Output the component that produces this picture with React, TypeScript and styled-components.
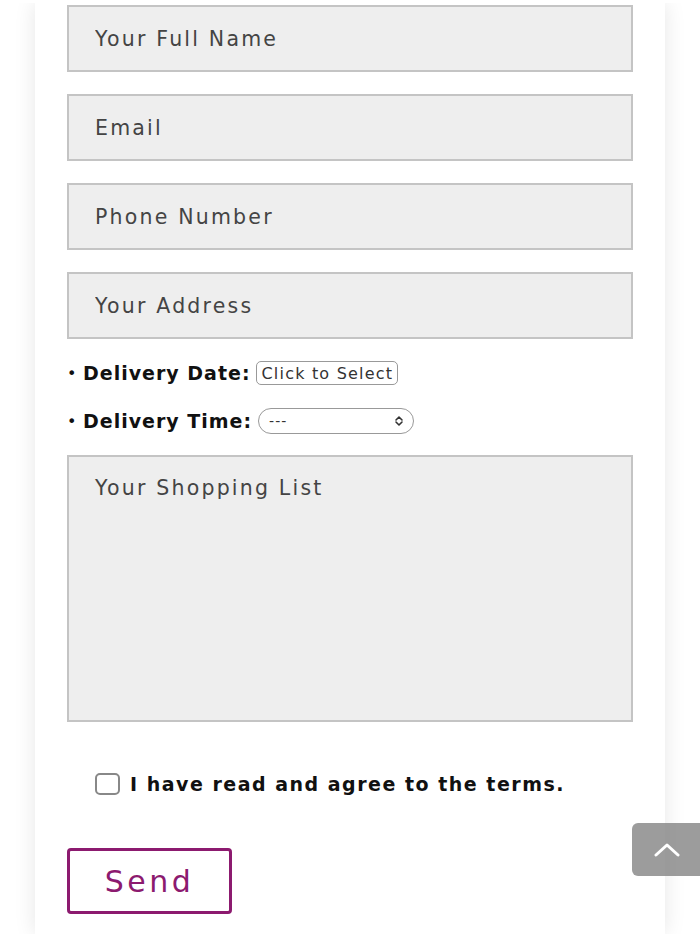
import * as React from 'react';
import styled, { createGlobalStyle } from 'styled-components';

const Global = createGlobalStyle`
  html, body {
    margin: 0;
    padding: 0;
    background: #ffffff;
  }
  body {
    font-family: 'DejaVu Sans', 'Open Sans', sans-serif;
  }
`;

const Frame = styled.div`
  padding: 3px 15px 0;
  height: 931px;
  overflow: hidden;
`;

const Shadowed = styled.div`
  height: 100%;
  padding: 0 20px;
  overflow: hidden;
`;

const Card = styled.div`
  height: 100%;
  background: #ffffff;
  box-shadow: 0 0 20px rgba(0, 0, 0, 0.1);
  padding: 2px 32px 0;
  box-sizing: border-box;
`;

const Form = styled.form`
  display: flex;
  flex-direction: column;
`;

const Field = styled.input`
  box-sizing: border-box;
  height: 67px;
  width: 100%;
  margin-bottom: 22px;
  border: 2px solid #c4c4c4;
  background: #eeeeee;
  padding: 0 26px;
  font-family: inherit;
  font-size: 20.5px;
  letter-spacing: 2.2px;
  color: #444;
  outline: none;
  &::placeholder {
    color: #444;
  }
`;

const Bullets = styled.ul`
  list-style: none;
  margin: 0;
  padding: 0;
  display: flex;
  flex-direction: column;
  gap: 23px;
`;

const Item = styled.li`
  display: flex;
  align-items: center;
  font-size: 19px;
  font-weight: bold;
  letter-spacing: 1px;
  color: #111;
  &::before {
    content: '•';
    font-weight: normal;
    font-size: 16px;
    width: 16px;
  }
`;

const Label = styled.span`
  margin-right: 6px;
`;

const DateButton = styled.button`
  box-sizing: border-box;
  height: 24px;
  padding: 0 4px 0 4px;
  border: 1px solid #999;
  border-radius: 5px;
  background: #fff;
  font-family: inherit;
  font-size: 16px;
  letter-spacing: 1.2px;
  color: #333;
`;

const Select = styled.div`
  box-sizing: border-box;
  height: 26px;
  width: 156px;
  display: flex;
  align-items: center;
  justify-content: space-between;
  padding: 0 8px 0 10px;
  border: 1px solid #999;
  border-radius: 13px;
  font-size: 14px;
  font-weight: normal;
  letter-spacing: 1px;
  color: #333;
`;

const ShoppingList = styled.textarea`
  box-sizing: border-box;
  margin-top: 21px;
  height: 267px;
  width: 100%;
  border: 2px solid #c4c4c4;
  background: #eeeeee;
  padding: 19px 26px;
  resize: none;
  font-family: inherit;
  font-size: 20.5px;
  letter-spacing: 2.2px;
  color: #444;
  outline: none;
  &::placeholder {
    color: #444;
  }
`;

const Agree = styled.label`
  display: flex;
  align-items: center;
  margin: 51px 0 0 28px;
  font-size: 19px;
  font-weight: bold;
  letter-spacing: 1.5px;
  color: #111;
`;

const Box = styled.span`
  box-sizing: border-box;
  width: 25px;
  height: 22px;
  border: 2px solid #888;
  border-radius: 5px;
  margin-right: 10px;
`;

const Send = styled.button`
  box-sizing: border-box;
  margin-top: 53px;
  width: 165px;
  height: 66px;
  border: 3px solid #8c1a6f;
  border-radius: 4px;
  background: #fff;
  color: #8c1a6f;
  font-family: inherit;
  font-size: 30px;
  letter-spacing: 3.5px;
  padding: 0;
`;

const ToTop = styled.div`
  position: fixed;
  left: 632px;
  top: 823px;
  width: 90px;
  height: 53px;
  border-radius: 6px;
  background: rgba(128, 128, 128, 0.78);
  display: flex;
  align-items: center;
  padding-left: 22px;
  box-sizing: border-box;
`;

export default function App() {
  return (
    <>
      <Global />
      <Frame>
        <Shadowed>
          <Card>
            <Form onSubmit={(e) => e.preventDefault()}>
              <Field placeholder="Your Full Name" />
              <Field placeholder="Email" />
              <Field placeholder="Phone Number" />
              <Field placeholder="Your Address" />
              <Bullets>
                <Item>
                  <Label>Delivery Date:</Label>
                  <DateButton type="button">Click to Select</DateButton>
                </Item>
                <Item>
                  <Label>Delivery Time:</Label>
                  <Select>
                    <span>---</span>
                    <svg width="12" height="12" viewBox="0 0 12 12" fill="none" stroke="#333" strokeWidth="1.6" strokeLinecap="round" strokeLinejoin="round">
                      <path d="M3 5 L6 2 L9 5" />
                      <path d="M3 7 L6 10 L9 7" />
                    </svg>
                  </Select>
                </Item>
              </Bullets>
              <ShoppingList placeholder="Your Shopping List" />
              <Agree>
                <Box />I have read and agree to the terms.
              </Agree>
              <div>
                <Send type="submit">Send</Send>
              </div>
            </Form>
          </Card>
        </Shadowed>
      </Frame>
      <ToTop>
        <svg width="26" height="16" viewBox="0 0 26 16" fill="none" stroke="#fff" strokeWidth="3" strokeLinecap="round" strokeLinejoin="round">
          <path d="M2 13 L13 3 L24 13" />
        </svg>
      </ToTop>
    </>
  );
}
